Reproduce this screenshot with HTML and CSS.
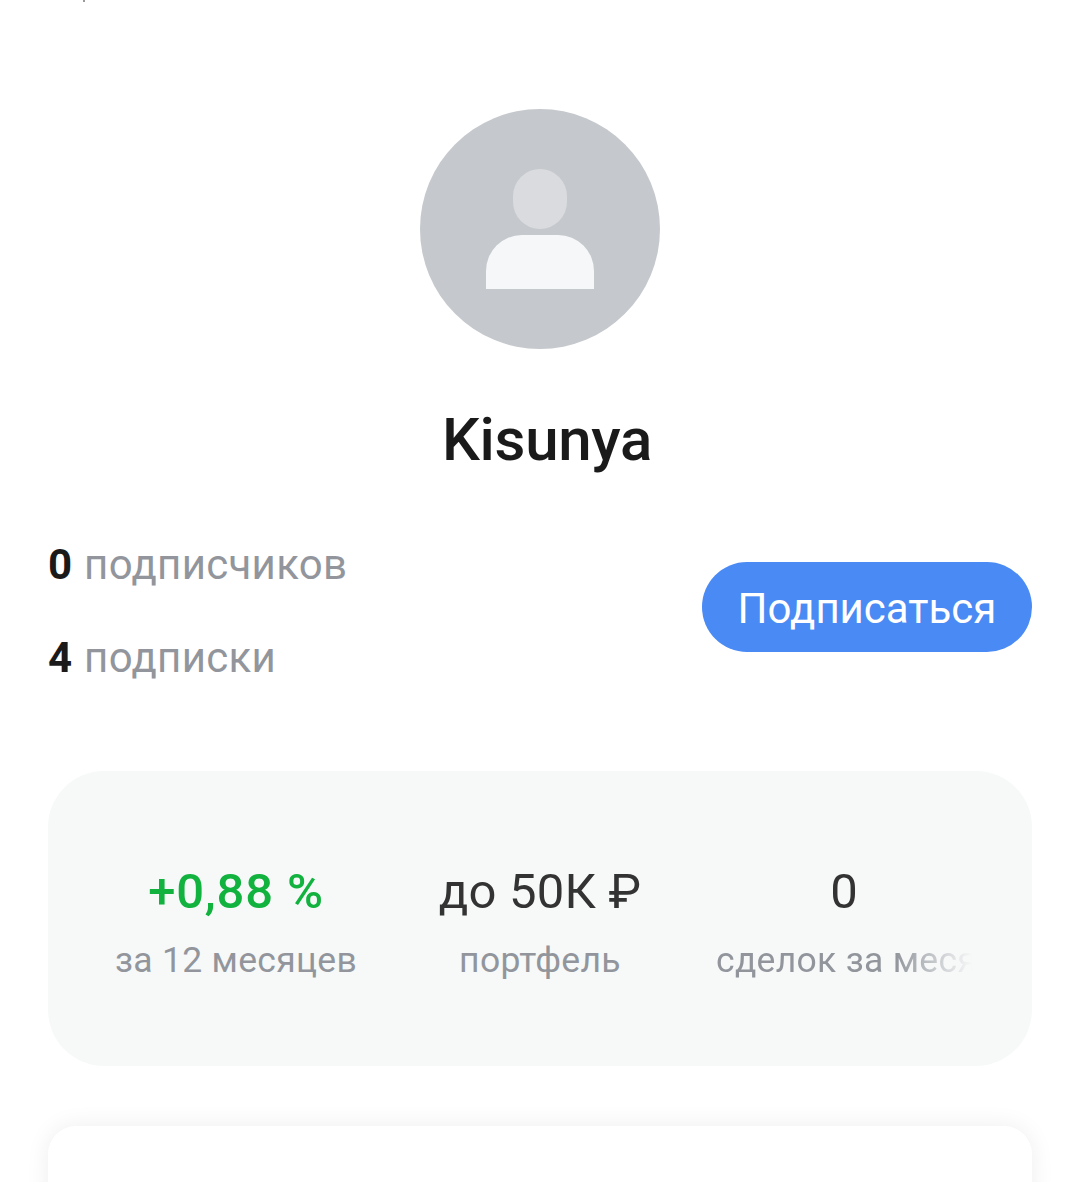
FILE: index.html
```html
<!DOCTYPE html>
<html lang="ru">
<head>
<meta charset="utf-8">
<title>Kisunya</title>
<link rel="stylesheet" href="styles.css">
</head>
<body>
<span class="top-speck"></span>
<main class="page">
  <svg class="avatar" viewBox="0 0 240 240" width="240" height="240" aria-hidden="true">
    <circle class="avatar-bg" cx="120" cy="120" r="120"/>
    <rect class="avatar-head" x="93" y="60" width="54" height="60" rx="27"/>
    <path class="avatar-body" d="M66 180v-18a36 36 0 0 1 36-36h36a36 36 0 0 1 36 36v18z"/>
  </svg>
  <h1 class="name">Kisunya</h1>
  <section class="follow">
    <div class="counts">
      <div class="count"><b>0</b> подписчиков</div>
      <div class="count"><b>4</b> подписки</div>
    </div>
    <button class="subscribe">Подписаться</button>
  </section>
  <section class="stats">
    <div class="stat">
      <div class="value value-up">+0,88 %</div>
      <div class="label">за 12 месяцев</div>
    </div>
    <div class="stat">
      <div class="value">до 50К ₽</div>
      <div class="label">портфель</div>
    </div>
    <div class="stat">
      <div class="value">0</div>
      <div class="label label-fade">сделок за месяц</div>
    </div>
  </section>
  <section class="next-card"></section>
</main>
</body>
</html>
```

FILE: styles.css
```css
* { box-sizing: border-box; }
html, body { margin: 0; height: 100%; background: #fff; overflow: hidden; }
body { position: relative; font-family: Roboto, "Noto Sans", sans-serif; }
.top-speck { position: absolute; left: 83px; top: 0; width: 2px; height: 2px; background: #9a9a9a; }
.page { padding: 109px 48px 0; display: flex; flex-direction: column; }
.avatar { display: block; align-self: center; flex: none; }
.avatar-bg { fill: #c5c8cc; }
.avatar-head { fill: #d9dbde; }
.avatar-body { fill: #f5f7f8; }
.name { margin: 52px 0 0; height: 78px; font-size: 60px; line-height: 78px; font-weight: 500; color: #1a1a1a; text-align: center; padding-left: 14px; letter-spacing: -0.3px; }
.follow { margin-top: 58px; display: flex; justify-content: space-between; align-items: center; }
.counts { display: flex; flex-direction: column; gap: 37px; }
.count { font-size: 42px; line-height: 56px; color: #92969c; letter-spacing: 0.3px; word-spacing: 1px; }
.count b { color: #1a1a1a; font-weight: 700; }
.subscribe { width: 330px; height: 90px; margin-bottom: 10px; border: 0; border-radius: 45px; background: #4a8af4; color: #fff; font-family: Roboto, sans-serif; font-size: 42px; padding: 3px 0 0; }
.stats { margin-top: 85px; height: 295px; border-radius: 56px; background: #f7f9f9; padding: 8px 40px 0; display: grid; grid-template-columns: repeat(3, 296px); column-gap: 8px; align-content: center; }
.stat { display: flex; flex-direction: column; align-items: center; }
.value { font-size: 49px; line-height: 56px; color: #333; letter-spacing: 0.2px; }
.value-up { color: #12b23f; font-weight: 500; letter-spacing: 0.8px; }
.label { margin-top: 18px; width: 256px; font-size: 35.5px; line-height: 44px; color: #92969c; text-align: center; white-space: nowrap; overflow: hidden; letter-spacing: 0.3px; }
.label-fade { text-align: left; -webkit-mask-image: linear-gradient(to right, #000 70%, transparent); mask-image: linear-gradient(to right, #000 70%, transparent); }
.next-card { margin-top: 60px; height: 300px; border-radius: 28px; background: #fff; box-shadow: 0 0 24px rgba(0, 0, 0, 0.07); }
```
